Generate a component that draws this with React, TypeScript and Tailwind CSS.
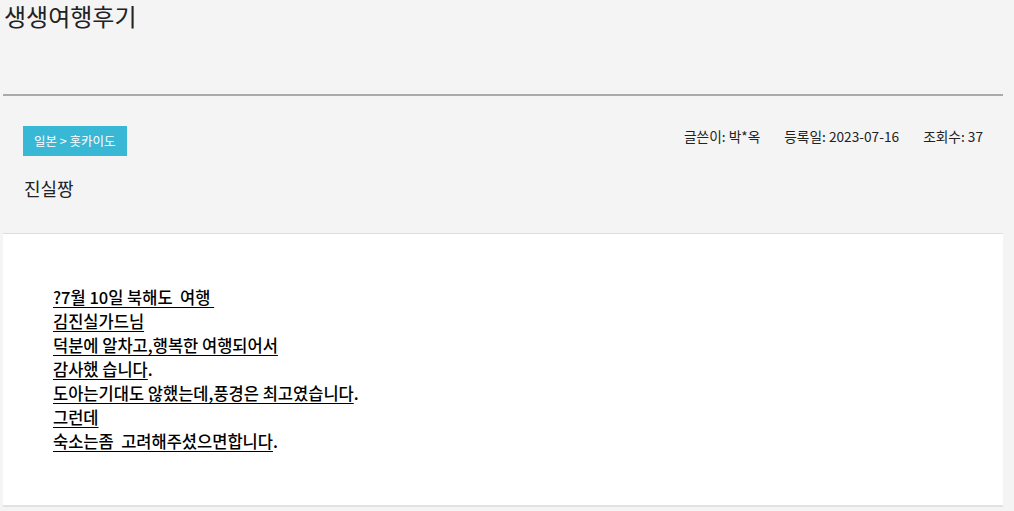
import React from "react";

const font = { fontFamily: '"Noto Sans CJK KR", "Noto Sans", sans-serif' };

const lines: { u: string; tail?: string }[] = [
  { u: "?7월 10일 북해도  여행 " },
  { u: "김진실가드님" },
  { u: "덕분에 알차고,행복한 여행되어서" },
  { u: "감사했 습니다", tail: "." },
  { u: "도아는기대도 않했는데,풍경은 최고였습니다", tail: "." },
  { u: "그런데" },
  { u: "숙소는좀  고려해주셨으면합니다", tail: "." },
];

export default function App() {
  return (
    <div className="min-h-screen bg-[#f4f4f4] text-[#111]" style={font}>
      <div className="w-[1000px] ml-[3px]">
        <h1 className="text-[24px] leading-[32px] pl-[1px] h-[94px] text-[#222]">생생여행후기</h1>
        <div className="border-t-2 border-[#aaaaaa]" />
        <div className="px-[20px] pt-[30px] h-[137px]">
          <div className="flex items-start justify-between">
            <span className="bg-[#39b8d6] text-white text-[12.5px] leading-[30px] h-[30px] px-[11px]">
              일본 &gt; 홋카이도
            </span>
            <div className="flex gap-[24px] text-[13.7px] leading-[20px] text-[#222] mt-[0px]">
              <span>글쓴이: 박*옥</span>
              <span>등록일: 2023-07-16</span>
              <span>조회수: 37</span>
            </div>
          </div>
          <div className="mt-[20px] text-[18px] leading-[24px] pl-[1px] text-[#222]">진실짱</div>
        </div>
        <div className="bg-white border-t border-[#dddddd] border-b-2 border-b-[#e2e2e2] h-[274px] pl-[50px] pt-[51px]">
          {lines.map((l, i) => (
            <div key={i} className="text-[16.5px] leading-[24px] font-medium text-black whitespace-pre">
              <span className="underline underline-offset-[3px]">{l.u}</span>
              {l.tail}
            </div>
          ))}
        </div>
      </div>
    </div>
  );
}
